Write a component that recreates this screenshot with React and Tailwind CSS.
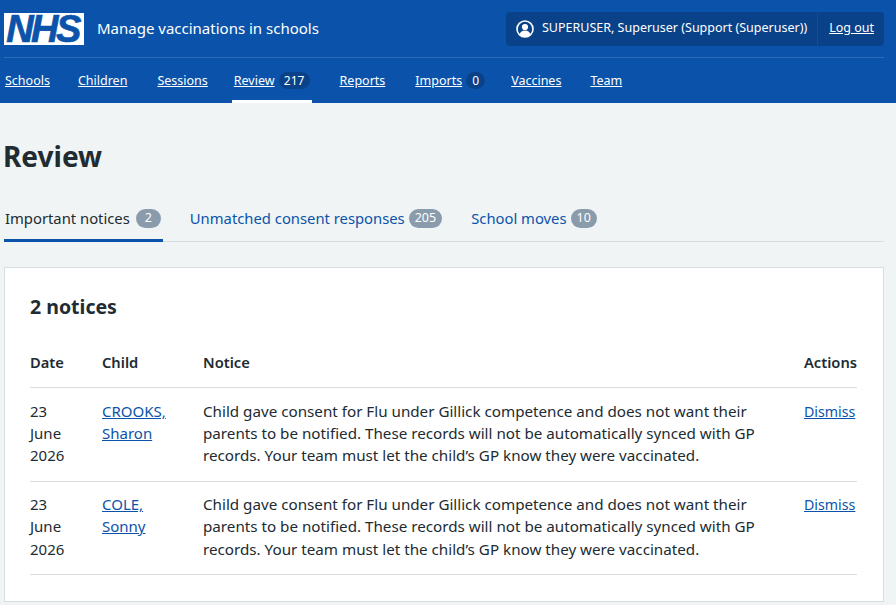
import React from 'react';

const navItems = [
  { label: 'Schools', gap: 'mr-[28px]' },
  { label: 'Children', gap: 'mr-[30px]' },
  { label: 'Sessions', gap: 'mr-[26px]' },
  { label: 'Review', count: 217, active: true, gap: 'mr-[30px]' },
  { label: 'Reports', gap: 'mr-[30px]' },
  { label: 'Imports', count: 0, gap: 'mr-[26px]' },
  { label: 'Vaccines', gap: 'mr-[29px]' },
  { label: 'Team', gap: 'mr-[29px]' },
];

const tabs = [
  { label: 'Important notices', count: 2, active: true, gap: 'mr-[27px]' },
  { label: 'Unmatched consent responses', count: 205, gap: 'mr-[29px]' },
  { label: 'School moves', count: 10, gap: 'mr-[28px]' },
];

const notices = [
  { first: 'CROOKS,', second: 'Sharon', top: 'pt-[12px]', dismissTop: 'pt-[13px]' },
  { first: 'COLE,', second: 'Sonny', top: 'pt-[11px]', dismissTop: 'pt-[12px]' },
];

const App = () => {
  return (
    <div className="h-[605px] bg-[#f0f4f5] text-[#212b32] font-['Noto_Sans',sans-serif] overflow-hidden">
      {/* Header */}
      <header className="bg-[#0b53aa] h-[103px] text-white">
        <div className="flex items-center justify-between h-[58px] ml-[4px] mr-[12px] border-b border-[#2a6cba]">
          <div className="flex items-center">
            <div className="w-[80px] h-[32px] bg-white flex items-center justify-center">
              <span className="text-[#0b53aa] text-[38px] leading-[32px] font-bold italic tracking-[-2.5px] pr-[3px] [-webkit-text-stroke:0.7px_#0b53aa] font-['Liberation_Sans',sans-serif]">NHS</span>
            </div>
            <span className="ml-[13px] mb-[2px] text-[15px] leading-[24px]">Manage vaccinations in schools</span>
          </div>
          <div className="flex items-center h-[34px] bg-[#0a4289] rounded-[4px] text-[12.5px]">
            <div className="flex items-center pl-[10px] pr-[10px]">
              <svg width="18" height="18" viewBox="0 0 18 18" className="mr-[8px]">
                <circle cx="9" cy="9" r="8" fill="none" stroke="white" strokeWidth="1.6" />
                <circle cx="9" cy="7" r="3.1" fill="white" />
                <path d="M3.6 14.6c.6-2.8 2.6-4.2 5.4-4.2s4.8 1.4 5.4 4.2c-1.4 1.4-3.3 2.2-5.4 2.2s-4-.8-5.4-2.2z" fill="white" />
              </svg>
              <span>SUPERUSER, Superuser (Support (Superuser))</span>
            </div>
            <div className="h-[32px] flex items-center border-l border-[#0b4f9e] pl-[11px] pr-[10px]">
              <a className="underline">Log out</a>
            </div>
          </div>
        </div>
        <nav className="flex items-start h-[45px] px-[5px] text-[12.5px]">
          {navItems.map((item) => (
            <div key={item.label} className={`relative flex items-center h-[45px] ${item.gap}`}>
              <a className="underline pt-[2px]">{item.label}</a>
              {item.count !== undefined && (
                <span className={`ml-[4px] h-[17px] flex items-center justify-center rounded-full bg-[#0a4289] text-[12px] ${item.active ? 'w-[31px]' : 'w-[19px]'}`}>
                  {item.count}
                </span>
              )}
              {item.active && <span className="absolute left-[-2px] right-[-2px] bottom-0 h-[3px] bg-white" />}
            </div>
          ))}
        </nav>
      </header>

      <main className="px-[4px]">
        <h1 className="mt-[35px] -ml-[1px] text-[28px] leading-[36px] font-bold">Review</h1>

        {/* Tabs */}
        <div className="flex mt-[23px] h-[45px] w-[880px] border-b border-[#d8dde0] text-[14.8px]">
          {tabs.map((tab) => (
            <div
              key={tab.label}
              className={`flex items-center h-[45px] border-b-[3px] ${tab.gap} ${tab.active ? 'border-[#0b53aa] pl-[1px] pr-[2px]' : 'border-transparent'}`}
            >
              <a className={tab.active ? '' : 'text-[#0b53aa]'}>{tab.label}</a>
              <span className={`h-[19px] min-w-[25px] px-[6px] flex items-center justify-center rounded-full bg-[#8a9bab] text-white text-[12.5px] ${tab.active ? 'ml-[6px]' : 'ml-[4px]'}`}>
                {tab.count}
              </span>
            </div>
          ))}
        </div>

        {/* Card */}
        <section className="mt-[25px] w-[880px] h-[335px] bg-white border border-[#d8dde0] px-[25px] pt-[25px]">
          <h2 className="text-[19.5px] leading-[28px] font-bold">2 notices</h2>
          <table className="mt-[23px] w-[827px] table-fixed text-[15px] leading-[22.4px]">
            <thead>
              <tr className="border-b border-[#d8dde0] text-left text-[14.7px]">
                <th className="w-[72px] h-[43px] pb-[6px] font-semibold">Date</th>
                <th className="w-[101px] pb-[6px] font-semibold">Child</th>
                <th className="pb-[6px] font-semibold">Notice</th>
                <th className="w-[53px] pb-[6px] font-semibold">Actions</th>
              </tr>
            </thead>
            <tbody>
              {notices.map((notice) => (
                <tr key={notice.first} className="border-b border-[#d8dde0] align-top">
                  <td className={`pb-[14px] pr-[20px] ${notice.top}`}>23 June 2026</td>
                  <td className={notice.top}>
                    <a className="text-[#0b53aa] underline">{notice.first}<br />{notice.second}</a>
                  </td>
                  <td className={`pr-[40px] text-[15.2px] ${notice.top}`}>
                    Child gave consent for Flu under Gillick competence and does not want their parents to be notified. These records will not be automatically synced with GP records. Your team must let the child’s GP know they were vaccinated.
                  </td>
                  <td className={`text-[14.2px] ${notice.dismissTop}`}>
                    <a className="text-[#0b53aa] underline">Dismiss</a>
                  </td>
                </tr>
              ))}
            </tbody>
          </table>
        </section>
      </main>
    </div>
  );
};

export default App;
